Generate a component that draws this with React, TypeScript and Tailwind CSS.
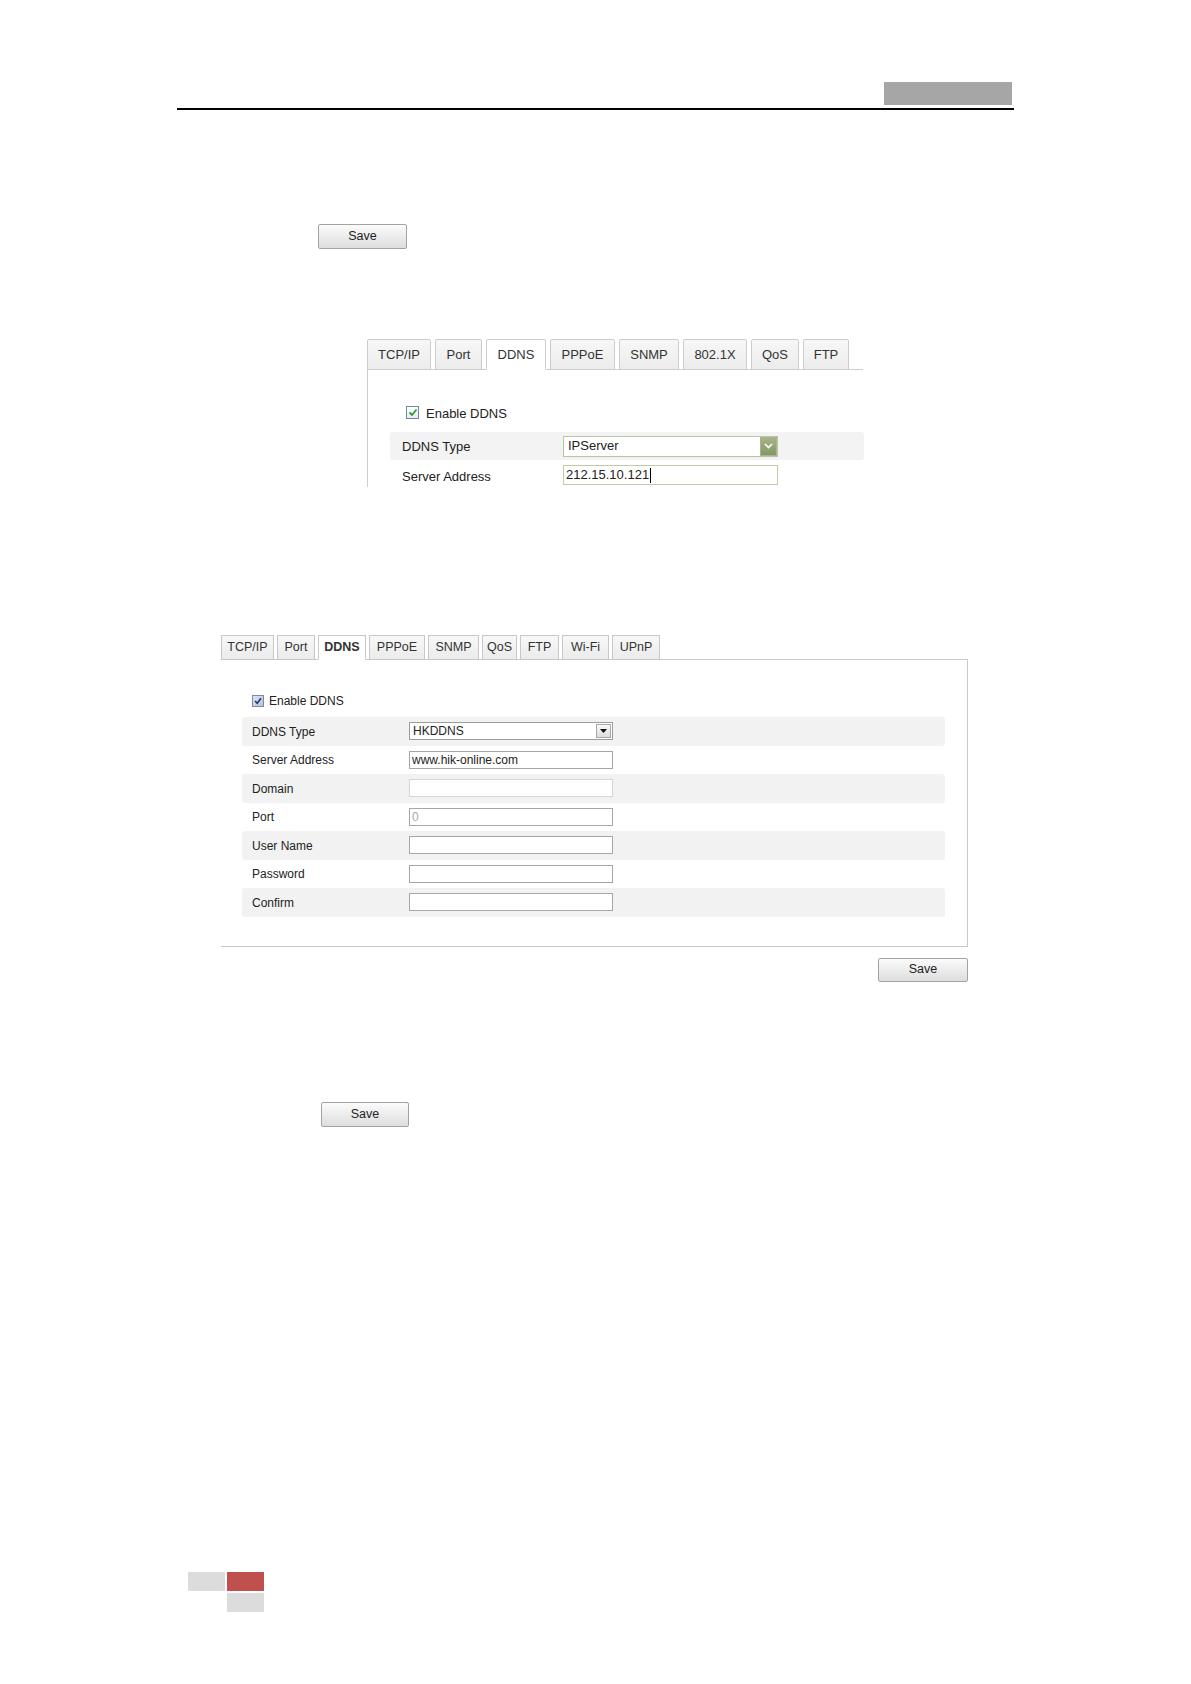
import React from 'react';

const font = "font-['Liberation_Sans',Arial,sans-serif]";

const SaveButton = ({ className = '' }: { className?: string }) => (
  <button
    type="button"
    className={`flex items-center justify-center rounded-[2px] border border-[#a3a3a3] bg-gradient-to-b from-[#fbfbfb] to-[#dedede] text-[12.5px] text-[#222] ${className}`}
  >
    Save
  </button>
);

interface Tab {
  label: string;
  width: string;
}

const bigTabs: Tab[] = [
  { label: 'TCP/IP', width: 'w-[64px]' },
  { label: 'Port', width: 'w-[47px]' },
  { label: 'DDNS', width: 'w-[60px]' },
  { label: 'PPPoE', width: 'w-[65px]' },
  { label: 'SNMP', width: 'w-[60px]' },
  { label: '802.1X', width: 'w-[64px]' },
  { label: 'QoS', width: 'w-[48px]' },
  { label: 'FTP', width: 'w-[46px]' },
];

const smallTabs: Tab[] = [
  { label: 'TCP/IP', width: 'w-[53px]' },
  { label: 'Port', width: 'w-[38px]' },
  { label: 'DDNS', width: 'w-[48px]' },
  { label: 'PPPoE', width: 'w-[56px]' },
  { label: 'SNMP', width: 'w-[51px]' },
  { label: 'QoS', width: 'w-[35px]' },
  { label: 'FTP', width: 'w-[39px]' },
  { label: 'Wi-Fi', width: 'w-[47px]' },
  { label: 'UPnP', width: 'w-[48px]' },
];

// first screenshot: newer web UI with green accents
const NewDdnsPanel = () => (
  <div className="ml-[367px] mt-[90px]">
    <div className="flex w-[496px] gap-[4px] border-b border-[#cdcdcd]">
      {bigTabs.map((t) => {
        const active = t.label === 'DDNS';
        return (
          <div
            key={t.label}
            className={`-mb-px flex h-[31px] items-center justify-center rounded-t-[2px] border border-[#cdcdcd] text-[13px] text-[#333] ${t.width} ${
              active ? 'border-b-white bg-white' : 'bg-gradient-to-b from-[#f7f7f7] to-[#ececec]'
            }`}
          >
            {t.label}
          </div>
        );
      })}
    </div>
    <div className="h-[117px] border-l border-[#cdcdcd] text-[13px] text-[#222]">
      <div className="flex items-center pl-[38px] pt-[35px]">
        <span className="flex h-[13px] w-[13px] items-center justify-center border border-[#7188a3] bg-gradient-to-b from-white to-[#e8edf2]">
          <svg width="10" height="9" viewBox="0 0 10 9">
            <path d="M1.5 4.5 L4 7 L8.5 1.5" fill="none" stroke="#2f9a32" strokeWidth="1.8" />
          </svg>
        </span>
        <span className="ml-[7px] pt-[2px] leading-none">Enable DDNS</span>
      </div>
      <div className="ml-[22px] mt-[12px] flex h-[28px] w-[474px] items-center rounded-[3px] bg-[#f3f3f3]">
        <span className="w-[173px] pl-[12px] pt-[2px]">DDNS Type</span>
        <div className="flex h-[21px] w-[215px] items-center border border-[#b9c4a2] bg-white">
          <span className="flex-1 pl-[4px]">IPServer</span>
          <span className="flex h-[19px] w-[17px] items-center justify-center border border-[#a9b58e] bg-gradient-to-b from-[#a5b38b] to-[#859766]">
            <svg width="9" height="6" viewBox="0 0 9 6">
              <path d="M1 1 L4.5 4.5 L8 1" fill="none" stroke="#ffffff" strokeWidth="1.6" />
            </svg>
          </span>
        </div>
      </div>
      <div className="ml-[22px] mt-[1px] flex h-[28px] w-[474px] items-center">
        <span className="w-[173px] pl-[12px] pt-[3px]">Server Address</span>
        <div className="flex h-[20px] w-[215px] items-center border border-[#c2cba8] bg-white pl-[2px]">
          <span>212.15.10.121</span>
          <span className="ml-[1px] h-[15px] w-px bg-black" />
        </div>
      </div>
    </div>
  </div>
);

interface Row {
  label: string;
  kind: 'select' | 'input';
  value?: string;
  muted?: boolean;
  faint?: boolean;
}

const rows: Row[] = [
  { label: 'DDNS Type', kind: 'select', value: 'HKDDNS' },
  { label: 'Server Address', kind: 'input', value: 'www.hik-online.com' },
  { label: 'Domain', kind: 'input', faint: true },
  { label: 'Port', kind: 'input', value: '0', muted: true },
  { label: 'User Name', kind: 'input' },
  { label: 'Password', kind: 'input' },
  { label: 'Confirm', kind: 'input' },
];

// second screenshot: older web UI
const OldDdnsPanel = () => (
  <div className="ml-[221px] mt-[148px]">
    <div className="flex w-[747px] gap-[3px] border-b border-[#c8c8c8]">
      {smallTabs.map((t) => {
        const active = t.label === 'DDNS';
        return (
          <div
            key={t.label}
            className={`-mb-px flex h-[25px] items-center justify-center border border-[#c8c8c8] text-[12.5px] text-[#333] ${t.width} ${
              active ? 'border-b-white bg-white font-bold text-[#222]' : 'bg-gradient-to-b from-[#f8f8f8] to-[#ebebeb]'
            }`}
          >
            {t.label}
          </div>
        );
      })}
    </div>
    <div className="w-[747px] border-b border-r border-[#c8c8c8] pb-[29px] text-[12px] text-[#222]">
      <div className="flex items-center pl-[31px] pt-[35px]">
        <span className="flex h-[12px] w-[12px] items-center justify-center border border-[#7d8aa0] bg-gradient-to-br from-[#dde3ee] to-[#b9c4da]">
          <svg width="8" height="8" viewBox="0 0 8 8">
            <path d="M1 4 L3.2 6.2 L7 1.3" fill="none" stroke="#23377a" strokeWidth="1.6" />
          </svg>
        </span>
        <span className="ml-[5px] leading-none">Enable DDNS</span>
      </div>
      <div className="ml-[21px] mr-[22px] mt-[10px] flex flex-col">
        {rows.map((r, i) => (
          <div
            key={r.label}
            className={`flex h-[28.5px] items-center rounded-[3px] ${i % 2 === 0 ? 'bg-[#f2f2f2]' : ''}`}
          >
            <span className="w-[167px] pl-[10px] pt-[1px]">{r.label}</span>
            {r.kind === 'select' ? (
              <div className="flex h-[18px] w-[204px] items-center border border-[#9c9c9c] bg-white">
                <span className="flex-1 pl-[3px]">{r.value}</span>
                <span className="mr-px flex h-[14px] w-[15px] items-center justify-center border border-[#a8a8a8] bg-gradient-to-b from-[#fafafa] to-[#dcdcdc]">
                  <svg width="7" height="4" viewBox="0 0 7 4">
                    <path d="M0 0 H7 L3.5 4 Z" fill="#111" />
                  </svg>
                </span>
              </div>
            ) : (
              <div
                className={`flex h-[18px] w-[204px] items-center border bg-white pl-[2px] ${
                  r.faint ? 'border-[#d6d6d6]' : 'border-[#a6a6a6]'
                } ${r.muted ? 'text-[#a8a8a8]' : ''}`}
              >
                {r.value}
              </div>
            )}
          </div>
        ))}
      </div>
    </div>
    <SaveButton className="ml-[657px] mt-[11px] h-[24px] w-[90px]" />
  </div>
);

const App = () => {
  return (
    <div className={`min-h-[1684px] w-[1191px] bg-white ${font}`}>
      <header className="ml-[177px] w-[837px] pt-[82px]">
        <div className="flex justify-end pr-[2px]">
          <div className="h-[23px] w-[128px] bg-[#a6a6a6]" />
        </div>
        <div className="mt-[3px] h-[2px] bg-black" />
      </header>

      <SaveButton className="ml-[318px] mt-[114px] h-[25px] w-[89px]" />

      <NewDdnsPanel />

      <OldDdnsPanel />

      <SaveButton className="ml-[321px] mt-[120px] h-[25px] w-[88px]" />

      <footer className="ml-[188px] mt-[445px] pb-[72px]">
        <div className="flex gap-[2px]">
          <div className="h-[19px] w-[37px] bg-[#dcdcdc]" />
          <div className="h-[19px] w-[37px] bg-[#c0504d]" />
        </div>
        <div className="ml-[39px] mt-[2px] h-[19px] w-[37px] bg-[#dcdcdc]" />
      </footer>
    </div>
  );
};

export default App;
